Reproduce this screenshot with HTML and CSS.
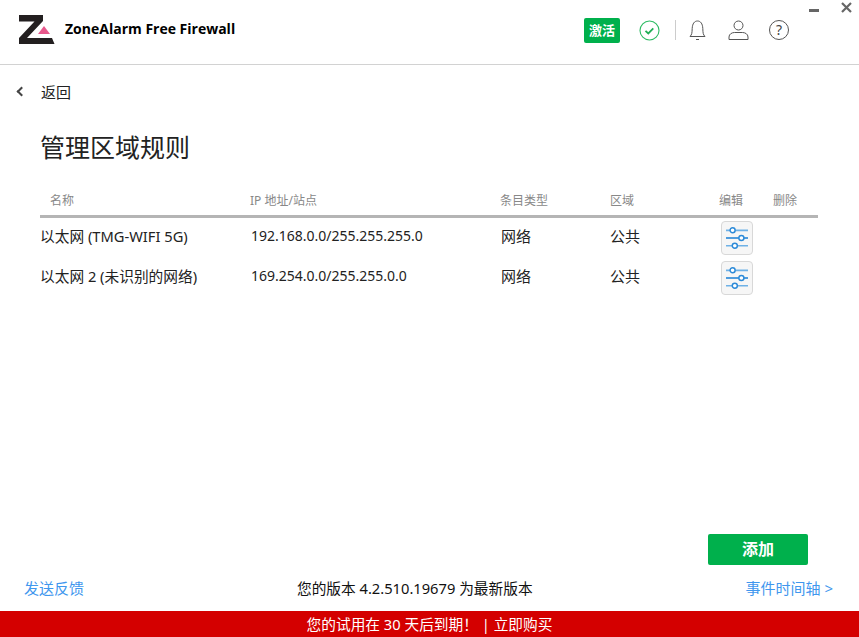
FILE: index.html
```html
<!DOCTYPE html>
<html lang="zh-CN">
<head>
    <meta charset="UTF-8">
    <title>ZoneAlarm Free Firewall</title>
    <link rel="stylesheet" href="styles.css">
</head>
<body>
    <div class="app">
        <!-- window buttons -->
        <div class="win-buttons">
            <svg class="win-min" width="10" height="4" viewBox="0 0 10 4"><rect width="10" height="3" y="0" fill="#666"/></svg>
            <svg class="win-close" width="11" height="11" viewBox="0 0 11 11"><path d="M1 1l9 9M10 1l-9 9" stroke="#666" stroke-width="2.2" fill="none"/></svg>
        </div>

        <header class="top-bar">
            <div class="brand">
                <svg class="logo" width="37" height="31" viewBox="0 0 37 31">
                    <path d="M0 0H24V6L8 23H33L35.500 29H0V23L15.500 6.500H0Z" fill="#231f20"/>
                    <path d="M25 11L31 19H19Z" fill="#e8588c"/>
                </svg>
                <span class="brand-name">ZoneAlarm Free Firewall</span>
            </div>
            <div class="top-icons">
                <span class="activate">激活</span>
                <svg class="ic-ok" width="21" height="21" viewBox="0 0 21 21">
                    <circle cx="10.5" cy="10.5" r="9.5" fill="none" stroke="#2dbb63" stroke-width="1.1"/>
                    <path d="M6.5 10.8l2.8 2.6 5-5" fill="none" stroke="#1fae55" stroke-width="1.8"/>
                </svg>
                <span class="top-sep"></span>
                <svg class="ic-bell" width="17" height="21" viewBox="0 0 17 21">
                    <path d="M1 16.5c2-2 2-3.5 2.200-8C3.400 3.500 5.500 1 8.500 1s5.100 2.500 5.300 7.500c.2 4.500.2 6 2.200 8z" fill="none" stroke="#555" stroke-width="1"/>
                    <path d="M7 19.500h3" stroke="#555" stroke-width="1"/>
                </svg>
                <svg class="ic-user" width="21" height="20" viewBox="0 0 21 20">
                    <circle cx="10.500" cy="5.500" r="4.500" fill="none" stroke="#555" stroke-width="1"/>
                    <path d="M1 19.500v-2.500c0-3 3-4.500 5.500-4.500h8c2.500 0 5.500 1.500 5.500 4.500v2.500z" fill="none" stroke="#555" stroke-width="1"/>
                </svg>
                <span class="ic-help">?</span>
            </div>
        </header>

        <main class="content">
            <a class="back"><span class="back-arrow"></span>返回</a>
            <h1 class="title">管理区域规则</h1>

            <div class="rules">
                <div class="rule-row rule-head">
                    <span class="col-name">名称</span>
                    <span class="col-ip">IP 地址/站点</span>
                    <span class="col-type">条目类型</span>
                    <span class="col-zone">区域</span>
                    <span class="col-edit">编辑</span>
                    <span class="col-del">删除</span>
                </div>
                <div class="rule-row">
                    <span class="col-name">以太网 (TMG-WIFI 5G)</span>
                    <span class="col-ip">192.168.0.0/255.255.255.0</span>
                    <span class="col-type">网络</span>
                    <span class="col-zone">公共</span>
                    <span class="col-edit">
                        <button class="edit-btn">
                            <svg width="22" height="22" viewBox="0 0 20 20">
                                <path d="M0 3h20M0 17h20" stroke="#6fb1e6" stroke-width="1.500"/>
                                <path d="M0 10h20" stroke="#2c8ad8" stroke-width="1.500"/>
                                <circle cx="6" cy="3" r="2.300" fill="#fff" stroke="#2c8ad8" stroke-width="1.300"/>
                                <circle cx="14" cy="10" r="2.300" fill="#fff" stroke="#2c8ad8" stroke-width="1.300"/>
                                <circle cx="8" cy="17" r="2.300" fill="#fff" stroke="#2c8ad8" stroke-width="1.300"/>
                            </svg>
                        </button>
                    </span>
                </div>
                <div class="rule-row">
                    <span class="col-name">以太网 2 (未识别的网络)</span>
                    <span class="col-ip">169.254.0.0/255.255.0.0</span>
                    <span class="col-type">网络</span>
                    <span class="col-zone">公共</span>
                    <span class="col-edit">
                        <button class="edit-btn">
                            <svg width="22" height="22" viewBox="0 0 20 20">
                                <path d="M0 3h20M0 17h20" stroke="#6fb1e6" stroke-width="1.500"/>
                                <path d="M0 10h20" stroke="#2c8ad8" stroke-width="1.500"/>
                                <circle cx="6" cy="3" r="2.300" fill="#fff" stroke="#2c8ad8" stroke-width="1.300"/>
                                <circle cx="14" cy="10" r="2.300" fill="#fff" stroke="#2c8ad8" stroke-width="1.300"/>
                                <circle cx="8" cy="17" r="2.300" fill="#fff" stroke="#2c8ad8" stroke-width="1.300"/>
                            </svg>
                        </button>
                    </span>
                </div>
            </div>
        </main>

        <div class="actions">
            <button class="add-btn">添加</button>
        </div>

        <div class="foot-links">
            <a class="link">发送反馈</a>
            <span class="version">您的版本 4.2.510.19679 为最新版本</span>
            <a class="link">事件时间轴 &gt;</a>
        </div>

        <div class="trial-bar">您的试用在 30 天后到期！ | 立即购买</div>
    </div>
</body>
</html>
```

FILE: styles.css
```css
* {
    box-sizing: border-box;
}

html, body {
    margin: 0;
    height: 100%;
}

body {
    font-family: "Noto Sans", "Noto Sans CJK SC", sans-serif;
    font-size: 14.7px;
    color: #222;
    background-color: white;
    overflow: hidden;
}

.app {
    position: relative;
    height: 637px;
    display: flex;
    flex-direction: column;
}

.win-buttons {
    position: absolute;
    top: 2px;
    right: 7px;
    display: flex;
    align-items: flex-start;
    gap: 22px;
}

.win-min {
    margin-top: 7px;
}

.top-bar {
    height: 65px;
    flex-shrink: 0;
    border-bottom: 1px solid #d2d2d2;
    display: flex;
    justify-content: space-between;
    padding: 15px 70px 0 19px;
}

.brand {
    display: flex;
    align-items: flex-start;
    gap: 9px;
}

.brand-name {
    font-family: "Open Sans", sans-serif;
    font-weight: 700;
    font-size: 14px;
    line-height: 28px;
    color: #000;
}

.top-icons {
    display: flex;
    align-items: center;
    height: 30px;
}

.activate {
    width: 36px;
    height: 25px;
    background-color: #00b04c;
    border-radius: 2px;
    color: white;
    font-size: 13px;
    font-weight: 700;
    line-height: 25px;
    text-align: center;
    margin-right: 19px;
}

.top-sep {
    width: 1px;
    height: 20px;
    background-color: #ccc;
    margin: 0 13px 0 15px;
}

.ic-user {
    margin: 0 20px 0 22px;
}

.ic-help {
    width: 20px;
    height: 20px;
    border: 1px solid #555;
    border-radius: 50%;
    text-align: center;
    line-height: 18px;
    font-size: 14px;
    color: #444;
}

.content {
    flex: 1;
    padding: 14px 41px 0 40px;
}

.back {
    display: flex;
    align-items: center;
    height: 24px;
    font-size: 15px;
    color: #222;
}

.back-arrow {
    width: 7px;
    height: 7px;
    border-left: 2px solid #444;
    border-bottom: 2px solid #444;
    transform: rotate(45deg);
    margin: 0 16px 0 -22px;
}

.title {
    font-size: 25px;
    font-weight: 400;
    margin: 26px 0 21px;
    line-height: 36px;
    color: #222;
}

.rule-row {
    display: grid;
    grid-template-columns: 210px 250px 110px 109px 54px 45px;
    align-items: center;
    height: 40px;
}

.rule-row .col-name, .rule-row .col-ip,
.rule-row .col-type, .rule-row .col-zone {
    padding-bottom: 5px;
}

.rule-head {
    height: 32px;
    border-bottom: 3px solid #b5b5b5;
    font-size: 12px;
    color: #888;
}

.rule-head span {
    padding-bottom: 2px;
}

.rule-head .col-name {
    padding-left: 10px;
}

.rule-row .col-ip, .rule-row .col-type {
    padding-left: 1px;
}

.rule-row .col-ip {
    font-size: 14px;
}

.rule-row .col-type, .rule-row .col-zone {
    font-size: 15px;
}

.rule-head .col-ip, .rule-head .col-type,
.rule-head .col-zone {
    padding-left: 0;
    padding-bottom: 2px;
    font-size: 12px;
}

.rule-head .col-name {
    padding-bottom: 2px;
}

.edit-btn {
    width: 32px;
    height: 34px;
    padding: 0;
    margin-left: 2px;
    background-color: #f6f6f6;
    border: 1px solid #d8d8d8;
    border-radius: 4px;
    display: flex;
    align-items: center;
    justify-content: center;
}

.actions {
    display: flex;
    justify-content: flex-end;
    padding-right: 51px;
    margin-bottom: 10px;
}

.add-btn {
    width: 100px;
    height: 31px;
    padding: 0 0 3px;
    background-color: #00b04c;
    color: white;
    border: none;
    border-radius: 2px;
    font-family: inherit;
    font-size: 16px;
    font-weight: 700;
}

.foot-links {
    display: flex;
    justify-content: space-between;
    align-items: center;
    height: 25px;
    padding: 0 26px 0 24px;
    margin-bottom: 11px;
}

.link {
    color: #3f97ee;
    font-size: 15px;
}

.version {
    color: #111;
}

.trial-bar {
    height: 26px;
    flex-shrink: 0;
    background-color: #d40000;
    color: white;
    text-align: center;
    line-height: 26px;
}
```
